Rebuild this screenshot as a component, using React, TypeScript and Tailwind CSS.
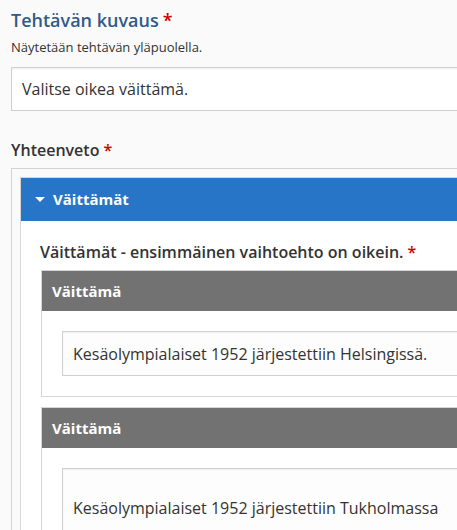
import React from "react";

const Star = () => <span className="text-[#cc0000] ml-[4px]">*</span>;

function Statement({ text, tall }: { text: string; tall?: boolean }) {
  return (
    <div className="border border-[#d6d6d6] bg-white">
      <div className="h-[40px] bg-[#737272] flex items-center pl-[10px] text-white font-bold text-[15px]">
        Väittämä
      </div>
      <div className="p-[20px]">
        <div
          className={
            "border border-[#d0d0d0] bg-[#fdfdfd] shadow-[inset_0_1px_2px_rgba(0,0,0,0.06)] pl-[10px] text-[16px] text-[#333] " +
            (tall ? "pt-[27px] h-[80px]" : "h-[45px] flex items-center")
          }
        >
          {text}
        </div>
      </div>
    </div>
  );
}

export default function App() {
  return (
    <div
      className="w-[457px] h-[530px] overflow-hidden bg-[#fafafa]"
      style={{ fontFamily: '"Open Sans", "Noto Sans", sans-serif' }}
    >
      <div className="w-[620px] pl-[11px] pt-[8px]">
        <div className="text-[18px] leading-[24px] font-semibold text-[#2f5b88]">
          Tehtävän kuvaus
          <Star />
        </div>
        <div className="mt-[7px] text-[13px] leading-[16px] text-[#333]">
          Näytetään tehtävän yläpuolella.
        </div>
        <div className="mt-[12px] h-[44px] border border-[#cfcfcf] bg-white shadow-[inset_0_1px_2px_rgba(0,0,0,0.07)] flex items-center pl-[10px] text-[16px] text-[#333]">
          Valitse oikea väittämä.
        </div>
        <div className="mt-[28px] text-[16px] leading-[22px] font-semibold text-[#333]">
          Yhteenveto
          <Star />
        </div>
        <div className="mt-[7px] border border-[#d3d3d3] pt-[8px] pl-[8px]">
          <div className="border border-[#d6d6d6] bg-white">
            <div className="h-[43px] bg-[#2775c6] flex items-center pl-[14px] text-white font-bold text-[15px]">
              <span className="inline-block w-0 h-0 border-l-[5px] border-r-[5px] border-t-[5px] border-l-transparent border-r-transparent border-t-white mr-[8px]" />
              Väittämät
            </div>
            <div className="pl-[20px] pt-[20px]">
              <div className="text-[16px] leading-[22px] font-semibold text-[#333] -ml-[1px]">
                Väittämät - ensimmäinen vaihtoehto on oikein.
                <Star />
              </div>
              <div className="mt-[7px] flex flex-col gap-[10px]">
                <Statement text="Kesäolympialaiset 1952 järjestettiin Helsingissä." />
                <Statement text="Kesäolympialaiset 1952 järjestettiin Tukholmassa" tall />
              </div>
            </div>
          </div>
        </div>
      </div>
    </div>
  );
}
